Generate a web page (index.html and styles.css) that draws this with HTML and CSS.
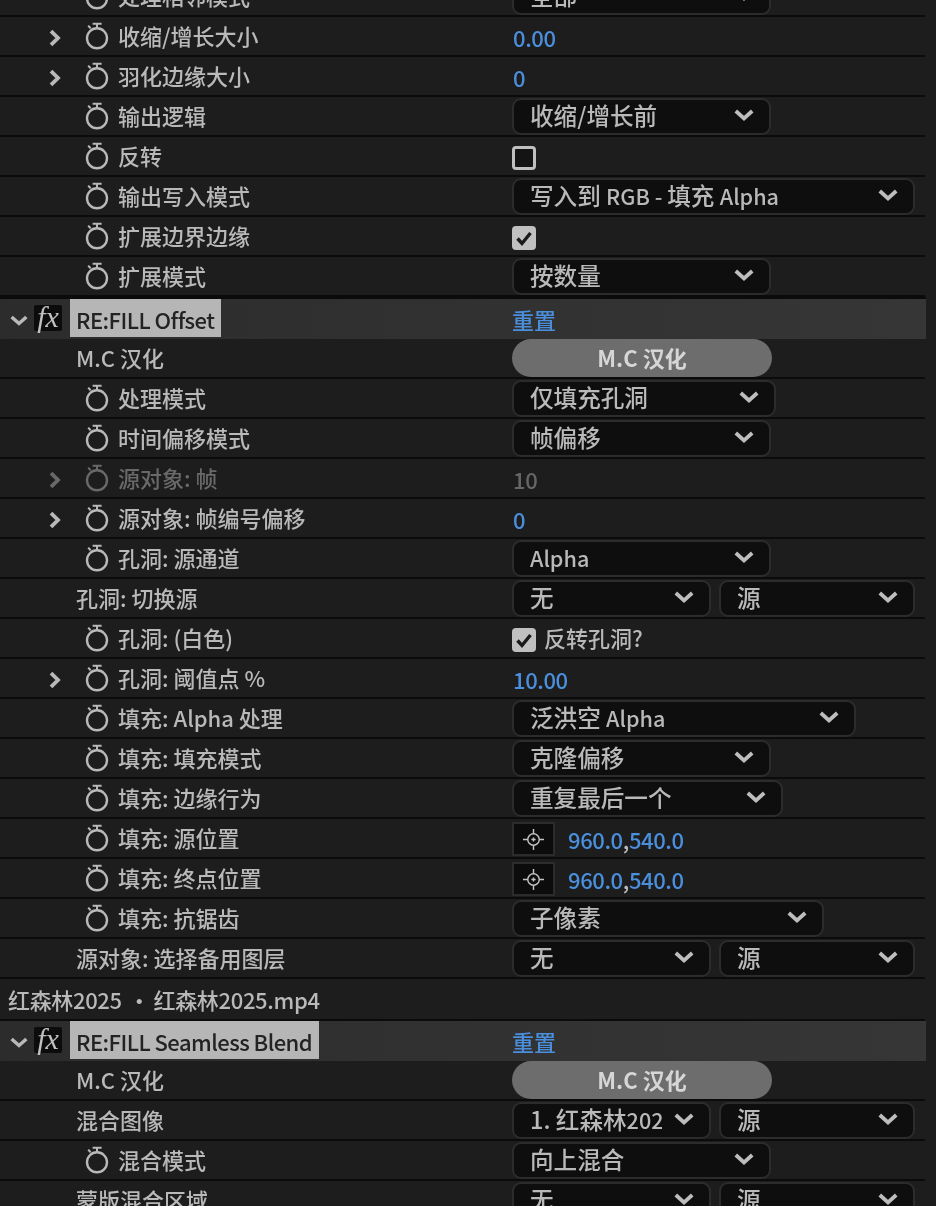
FILE: index.html
```html
<!DOCTYPE html>
<html lang="zh">
<head>
<meta charset="UTF-8">
<title>Effect Controls</title>
<link rel="stylesheet" href="styles.css">
</head>
<body>

<svg class="defs" width="0" height="0">
  <symbol id="watch" viewBox="0 0 24 28">
    <circle cx="12" cy="16.3" r="10" fill="none" stroke="currentColor" stroke-width="2.4"/>
    <path d="M7.6 1.8h9M12 1.8v4.4M3.2 3.6l2.4 2.6" fill="none" stroke="currentColor" stroke-width="2"/>
  </symbol>
  <symbol id="right" viewBox="0 0 12 18">
    <path d="M2 2.2 9 9l-7 6.8" fill="none" stroke="currentColor" stroke-width="3.8"/>
  </symbol>
  <symbol id="down" viewBox="0 0 20 12">
    <path d="M1.8 2 10 9.4 18.2 2" fill="none" stroke="currentColor" stroke-width="3.8"/>
  </symbol>
  <symbol id="check" viewBox="0 0 24 24">
    <path d="M5.5 12.5 10 17.5 18.5 7" fill="none" stroke="currentColor" stroke-width="3.4"/>
  </symbol>
  <symbol id="target" viewBox="0 0 24 24">
    <circle cx="12" cy="12" r="6" fill="none" stroke="currentColor" stroke-width="1.5"/>
    <path d="M1 12h5M18 12h5M12 1v5M12 18v5M9.8 12h4.4M12 9.8v4.4" fill="none" stroke="currentColor" stroke-width="1.5"/>
  </symbol>
</svg>

<div class="panel">

  <div class="row">
    <div class="name"><svg class="watch"><use href="#watch"/></svg><span>处理相邻模式</span></div>
    <div class="val"><div class="dd w259"><span class="dd-text">全部</span><svg class="dd-arrow"><use href="#down"/></svg></div></div>
  </div>
  <div class="row">
    <div class="name"><svg class="twirl"><use href="#right"/></svg><svg class="watch"><use href="#watch"/></svg><span>收缩/增长大小</span></div>
    <div class="val num">0.00</div>
  </div>
  <div class="row">
    <div class="name"><svg class="twirl"><use href="#right"/></svg><svg class="watch"><use href="#watch"/></svg><span>羽化边缘大小</span></div>
    <div class="val num">0</div>
  </div>
  <div class="row">
    <div class="name"><svg class="watch"><use href="#watch"/></svg><span>输出逻辑</span></div>
    <div class="val"><div class="dd w259"><span class="dd-text">收缩/增长前</span><svg class="dd-arrow"><use href="#down"/></svg></div></div>
  </div>
  <div class="row">
    <div class="name"><svg class="watch"><use href="#watch"/></svg><span>反转</span></div>
    <div class="val"><div class="cb"></div></div>
  </div>
  <div class="row">
    <div class="name"><svg class="watch"><use href="#watch"/></svg><span>输出写入模式</span></div>
    <div class="val"><div class="dd w403"><span class="dd-text">写入到 <i>RGB - </i>填充 <i>Alpha</i></span><svg class="dd-arrow"><use href="#down"/></svg></div></div>
  </div>
  <div class="row">
    <div class="name"><svg class="watch"><use href="#watch"/></svg><span>扩展边界边缘</span></div>
    <div class="val"><div class="cb on"><svg class="cb-mark"><use href="#check"/></svg></div></div>
  </div>
  <div class="row">
    <div class="name"><svg class="watch"><use href="#watch"/></svg><span>扩展模式</span></div>
    <div class="val"><div class="dd w259"><span class="dd-text">按数量</span><svg class="dd-arrow"><use href="#down"/></svg></div></div>
  </div>

  <div class="fx-head">
    <div class="fx-left"><svg class="fx-twirl"><use href="#down"/></svg><span class="fx-badge">fx</span><span class="fx-name">RE:FILL Offset</span></div>
    <div class="reset">重置</div>
  </div>
  <div class="row">
    <div class="name plain"><span>M.C 汉化</span></div>
    <div class="val"><div class="pill">M.C 汉化</div></div>
  </div>
  <div class="row">
    <div class="name"><svg class="watch"><use href="#watch"/></svg><span>处理模式</span></div>
    <div class="val"><div class="dd w264"><span class="dd-text">仅填充孔洞</span><svg class="dd-arrow"><use href="#down"/></svg></div></div>
  </div>
  <div class="row">
    <div class="name"><svg class="watch"><use href="#watch"/></svg><span>时间偏移模式</span></div>
    <div class="val"><div class="dd w259"><span class="dd-text">帧偏移</span><svg class="dd-arrow"><use href="#down"/></svg></div></div>
  </div>
  <div class="row off">
    <div class="name"><svg class="twirl"><use href="#right"/></svg><svg class="watch"><use href="#watch"/></svg><span>源对象: 帧</span></div>
    <div class="val num">10</div>
  </div>
  <div class="row">
    <div class="name"><svg class="twirl"><use href="#right"/></svg><svg class="watch"><use href="#watch"/></svg><span>源对象: 帧编号偏移</span></div>
    <div class="val num">0</div>
  </div>
  <div class="row">
    <div class="name"><svg class="watch"><use href="#watch"/></svg><span>孔洞: 源通道</span></div>
    <div class="val"><div class="dd w259"><span class="dd-text"><i>Alpha</i></span><svg class="dd-arrow"><use href="#down"/></svg></div></div>
  </div>
  <div class="row">
    <div class="name plain"><span>孔洞: 切换源</span></div>
    <div class="val pair">
      <div class="dd half"><span class="dd-text">无</span><svg class="dd-arrow"><use href="#down"/></svg></div>
      <div class="dd half2"><span class="dd-text">源</span><svg class="dd-arrow"><use href="#down"/></svg></div>
    </div>
  </div>
  <div class="row">
    <div class="name"><svg class="watch"><use href="#watch"/></svg><span>孔洞: (白色)</span></div>
    <div class="val"><div class="cb on"><svg class="cb-mark"><use href="#check"/></svg></div><span class="cb-label">反转孔洞?</span></div>
  </div>
  <div class="row">
    <div class="name"><svg class="twirl"><use href="#right"/></svg><svg class="watch"><use href="#watch"/></svg><span>孔洞: 阈值点 %</span></div>
    <div class="val num">10.00</div>
  </div>
  <div class="row">
    <div class="name"><svg class="watch"><use href="#watch"/></svg><span>填充: Alpha 处理</span></div>
    <div class="val"><div class="dd w344"><span class="dd-text">泛洪空 <i>Alpha</i></span><svg class="dd-arrow"><use href="#down"/></svg></div></div>
  </div>
  <div class="row">
    <div class="name"><svg class="watch"><use href="#watch"/></svg><span>填充: 填充模式</span></div>
    <div class="val"><div class="dd w259"><span class="dd-text">克隆偏移</span><svg class="dd-arrow"><use href="#down"/></svg></div></div>
  </div>
  <div class="row">
    <div class="name"><svg class="watch"><use href="#watch"/></svg><span>填充: 边缘行为</span></div>
    <div class="val"><div class="dd w271"><span class="dd-text">重复最后一个</span><svg class="dd-arrow"><use href="#down"/></svg></div></div>
  </div>
  <div class="row">
    <div class="name"><svg class="watch"><use href="#watch"/></svg><span>填充: 源位置</span></div>
    <div class="val"><div class="pt"><svg class="pt-mark"><use href="#target"/></svg></div><span class="pt-val"><b>960.0</b>,<b>540.0</b></span></div>
  </div>
  <div class="row">
    <div class="name"><svg class="watch"><use href="#watch"/></svg><span>填充: 终点位置</span></div>
    <div class="val"><div class="pt"><svg class="pt-mark"><use href="#target"/></svg></div><span class="pt-val"><b>960.0</b>,<b>540.0</b></span></div>
  </div>
  <div class="row">
    <div class="name"><svg class="watch"><use href="#watch"/></svg><span>填充: 抗锯齿</span></div>
    <div class="val"><div class="dd w312"><span class="dd-text">子像素</span><svg class="dd-arrow"><use href="#down"/></svg></div></div>
  </div>
  <div class="row">
    <div class="name plain"><span>源对象: 选择备用图层</span></div>
    <div class="val pair">
      <div class="dd half"><span class="dd-text">无</span><svg class="dd-arrow"><use href="#down"/></svg></div>
      <div class="dd half2"><span class="dd-text">源</span><svg class="dd-arrow"><use href="#down"/></svg></div>
    </div>
  </div>

  <div class="clip-row">红森林2025 <span class="dot">•</span> 红森林2025.mp4</div>

  <div class="fx-head after-clip">
    <div class="fx-left"><svg class="fx-twirl"><use href="#down"/></svg><span class="fx-badge">fx</span><span class="fx-name">RE:FILL Seamless Blend</span></div>
    <div class="reset">重置</div>
  </div>
  <div class="row">
    <div class="name plain"><span>M.C 汉化</span></div>
    <div class="val"><div class="pill">M.C 汉化</div></div>
  </div>
  <div class="row">
    <div class="name plain"><span>混合图像</span></div>
    <div class="val pair">
      <div class="dd half"><span class="dd-text cut">1. 红森林<i>2025</i></span><svg class="dd-arrow"><use href="#down"/></svg></div>
      <div class="dd half2"><span class="dd-text">源</span><svg class="dd-arrow"><use href="#down"/></svg></div>
    </div>
  </div>
  <div class="row">
    <div class="name"><svg class="watch"><use href="#watch"/></svg><span>混合模式</span></div>
    <div class="val"><div class="dd w259"><span class="dd-text">向上混合</span><svg class="dd-arrow"><use href="#down"/></svg></div></div>
  </div>
  <div class="row">
    <div class="name plain"><span>蒙版混合区域</span></div>
    <div class="val pair">
      <div class="dd half"><span class="dd-text">无</span><svg class="dd-arrow"><use href="#down"/></svg></div>
      <div class="dd half2"><span class="dd-text">源</span><svg class="dd-arrow"><use href="#down"/></svg></div>
    </div>
  </div>

</div>

<!-- faint site watermark laid over the panel -->
<div class="wm wm1">红森林<small>HOSLIN.CN</small></div>
<div class="wm wm2">红森林<small>HOSLIN.CN</small></div>
<div class="wm wm3">红森林<small>HOSLIN.CN</small></div>
<div class="wm wm4">红森林<small>HOSLIN.CN</small></div>
<div class="wm wm5">红森林<small>HOSLIN.CN</small></div>
<div class="wm wm6">红森林<small>HOSLIN.CN</small></div>

</body>
</html>
```

FILE: styles.css
```css
html, body { margin: 0; height: 1206px; overflow: hidden; background: #1d1d1d; }
body { position: relative; font-family: "Noto Sans CJK SC", "Noto Sans", sans-serif; font-size: 22px; font-weight: 500; line-height: 30px; color: #b9b9b9; }

.defs { position: absolute; }

.panel { width: 925px; margin-top: -23px; filter: blur(.35px); }

/* one property line */
.row { display: grid; grid-template-columns: 512px 1fr; height: 40px; box-sizing: border-box; border-bottom: 2px solid #0b0b0b; }
.row.off { color: #696969; }

.name { display: flex; align-items: center; padding-left: 86px; white-space: nowrap; position: relative; }
.name.plain { padding-left: 76px; }
.name span { margin-left: 9px; padding-bottom: 2px; }
.name.plain span { margin-left: 0; }

.watch { width: 24px; height: 28px; flex: none; margin-left: -1px; }
.twirl { width: 12px; height: 18px; margin-left: -37px; margin-right: 25px; margin-top: 4px; flex: none; }

.val { display: flex; align-items: center; }
.val.num { color: #4a8fdc; padding-top: 1px; padding-left: 1px; letter-spacing: -.4px; }
.row.off .val.num { color: #666; }
.val.pair { gap: 8px; }

/* dropdowns */
.dd { display: flex; align-items: center; height: 37px; box-sizing: border-box; padding: 0 15px 0 16px; background: #0e0e0e; border: 2px solid #2c2c2c; border-radius: 9px; }
.dd-text { flex: 1; min-width: 0; white-space: nowrap; font-size: 23.6px; padding-bottom: 2px; }
.dd-text.cut { overflow: hidden; line-height: 35px; height: 35px; padding-bottom: 0; margin-top: -2px; }
.dd-text i { font-style: normal; font-size: 21.6px; }
.dd-arrow { width: 20px; height: 12px; flex: none; margin-top: -3px; margin-left: 12px; color: #bdbdbd; }
.w259 { width: 259px; }
.w264 { width: 264px; }
.w271 { width: 271px; }
.w312 { width: 312px; }
.w344 { width: 344px; }
.w403 { width: 403px; }
.half { width: 199px; }
.half2 { width: 196px; }

/* checkbox */
.cb { width: 24px; height: 24px; margin-top: 3px; box-sizing: border-box; border: 3px solid #c0c0c0; border-radius: 4px; background: #141414; flex: none; }
.cb.on { background: #c0c0c0; border: 0; }
.cb-mark { display: block; width: 24px; height: 24px; color: #1a1a1a; }
.cb-label { margin-left: 8px; padding-bottom: 2px; }

/* button */
.pill { width: 260px; height: 38px; border-radius: 19px; background: #6d6d6d; color: #d6d6d6; font-weight: 700; text-align: center; line-height: 36px; }

/* point control */
.pt { display: flex; align-items: center; justify-content: center; width: 43px; height: 34px; margin-top: 2px; box-sizing: border-box; border: 2px solid #2c2c2c; background: #0c0c0c; flex: none; }
.pt-mark { width: 23px; height: 23px; color: #c4c4c4; }
.pt-val { margin-left: 13px; color: #b9b9b9; padding-top: 1px; letter-spacing: -.4px; }
.pt-val b { font-weight: 500; color: #4a8fdc; }

/* effect header */
.fx-head { display: grid; grid-template-columns: 512px 1fr; width: 926px; height: 42px; box-sizing: border-box; border-top: 2px solid #0b0b0b; background: linear-gradient(90deg, #2c2c2c, #363636); }
.fx-head.after-clip { height: 40px; border-top: 0; }
.fx-left { display: flex; align-items: flex-start; }
.fx-twirl { width: 18px; height: 11px; margin: 16px 6px 0 10px; flex: none; color: #b9b9b9; }
.fx-badge { width: 28px; height: 26px; margin-top: 6px; background: #0c0c0c; border-radius: 2px; color: #c0c0c0; font-family: "Liberation Serif", serif; font-style: italic; font-weight: 400; font-size: 30px; line-height: 24px; text-align: center; flex: none; }
.fx-name { height: 38px; margin-left: 8px; padding: 0 7px 0 6px; background: #b6b6b6; color: #232323; line-height: 40px; letter-spacing: -.55px; white-space: nowrap; }
.reset { color: #4a8fdc; padding-top: 5px; }

/* clip name line */
.clip-row { height: 42px; box-sizing: border-box; border-bottom: 2px solid #0b0b0b; padding-left: 8px; line-height: 40px; letter-spacing: -.35px; white-space: nowrap; }
.dot { margin: 0 -1px 0 2px; }

/* watermark */
.wm { position: absolute; width: 260px; text-align: center; font-size: 44px; line-height: 46px; font-weight: 700; color: rgba(255,255,255,.022); transform: rotate(-45deg); white-space: nowrap; pointer-events: none; }
.wm small { display: block; font-size: 30px; line-height: 32px; letter-spacing: 2px; }
.wm1 { left: 120px; top: 90px; }
.wm2 { left: 500px; top: 90px; }
.wm3 { left: 120px; top: 495px; }
.wm4 { left: 530px; top: 495px; }
.wm5 { left: 120px; top: 895px; }
.wm6 { left: 490px; top: 895px; }
```
